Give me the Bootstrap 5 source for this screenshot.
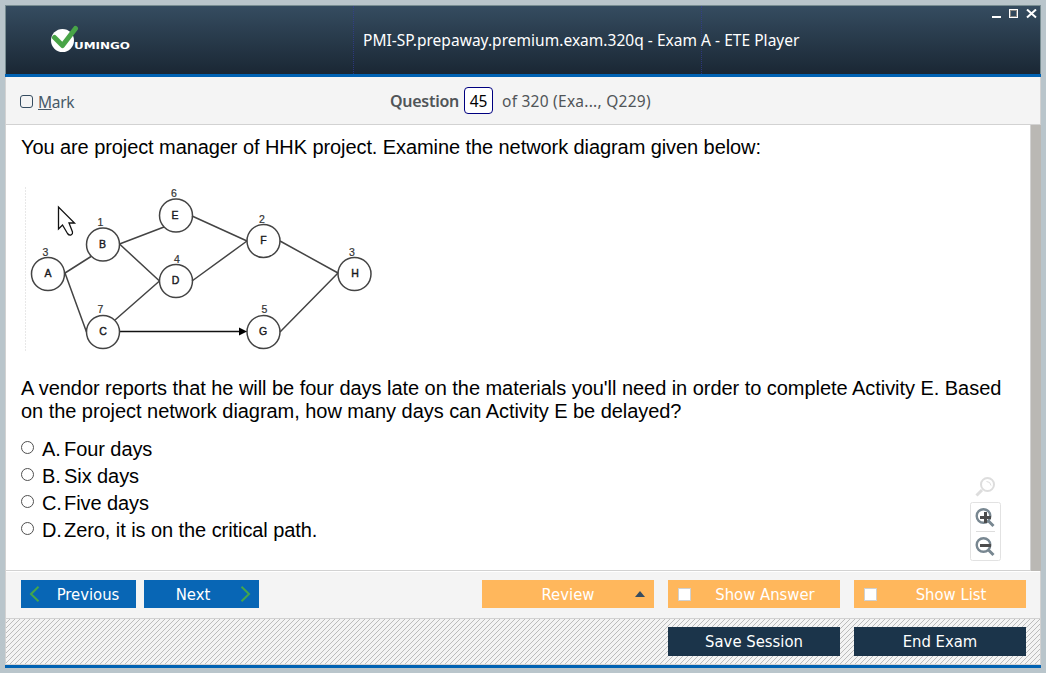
<!DOCTYPE html>
<html lang="en">
<head>
<meta charset="utf-8">
<title>ETE Player</title>
<link rel="stylesheet" href="https://cdn.jsdelivr.net/npm/bootstrap@5.3.0/dist/css/bootstrap.min.css">
<style>
body{background:#b9c5cb;padding:5px;font-family:"Liberation Sans",Arial,sans-serif;color:#000;overflow:hidden}
.player{height:663px;background:#f4f4f4}
.titlebar{height:69px;background:linear-gradient(#354c60,#1a2734);border:1px solid #788d92;border-bottom:0;padding-left:44px}
.titlebar .guide{width:0;border-left:1px dotted #343ca0;left:347px;opacity:.65}
.titlebar .guide + .guide{left:695px}
.caption{left:357px;top:23px;font:15.5px/22px "Noto Sans","Open Sans",sans-serif;color:#fff;white-space:nowrap;letter-spacing:.03px}
.winctl{right:3px;top:3px}
.rule{height:3px;background:#0062b3}
.sub{height:48px;border:solid #d2d2d2;border-width:0 1px 1px;padding-left:14px;font:16px/24px "Noto Sans","Open Sans",sans-serif;color:#505558}
.tick{width:13px;height:13px;border:1px solid #354c60;border-radius:3px;margin:1px 5px 0 0}
.marklabel{width:352px;color:#465968;font-size:15.5px;letter-spacing:-.3px;padding-top:2px}
.qno{width:29px;height:27px;border:1px solid navy;border-radius:4px;background:#fff;color:#000;margin:0 9px 0 5px;font-size:15.5px;line-height:27px}
.qword{font-weight:600;font-size:16px;letter-spacing:-.27px}
.qrest{font-size:15.5px;letter-spacing:.25px}
.content-pane{height:446px;background:#fff;border-left:1px solid #d2d2d2;border-bottom:1px solid #d2d2d2}
.question{padding:10px 0 0 15px;font-size:20px;line-height:24px}
.question p{margin:0;white-space:nowrap;letter-spacing:-.045px;line-height:23px}
.question .intro{letter-spacing:-.08px;line-height:24px}
.scroller{width:11px;background:#bab8b4;border-left:1px solid #d2d2d2;margin-bottom:-1px}
.diagram{margin:26px 0 22px 4px;display:block}
.options{margin-top:13px;letter-spacing:-.07px}
.option{height:27px;line-height:27px}
.option i{width:13px;height:13px;border:1px solid #505050;border-radius:50%;margin:-4px 8px 0 0}
.option b{font-weight:400;width:22px}
.zoomer{right:35px;bottom:6px}
.actions{height:48px;border:solid #d2d2d2;border-width:0 1px 1px;box-shadow:inset 0 1px #fff;padding:0 14px 1px 15px}
.footer-strip{height:46px;border:solid #d2d2d2;border-width:0 1px 1px;padding:0 14px 0 0;background:repeating-linear-gradient(135deg,#f4f4f4 0,#f4f4f4 2.5px,#bcbcbc 2.7px,#bcbcbc 3.2px,#f4f4f4 3.5355px)}
.act{height:28px;border:0;padding:0;border-radius:0;color:#fff;font:16.5px/30px "DejaVu Sans Condensed","DejaVu Sans",sans-serif;font-stretch:condensed;position:relative;text-align:center;white-space:nowrap}
.nav-act{width:115px;background:#0866b5}
.opt-act{width:172px;background:#ffb75c}
.end-act{width:172px;height:29px;background:#1b344a}
.box{width:13px;height:13px;background:#fff;border:1px solid #d0d0d0;left:10px;top:8px}
</style>
<script src="https://cdn.jsdelivr.net/npm/bootstrap@5.3.0/dist/js/bootstrap.bundle.min.js"></script>
</head>
<body>
<main class="player d-flex flex-column">
<header class="titlebar position-relative flex-shrink-0">
  <span class="guide position-absolute top-0 bottom-0"></span><span class="guide position-absolute top-0 bottom-0"></span>
  <svg width="84" height="30" viewBox="50 25 84 30" style="margin-top:19px">
    <circle cx="62.500" cy="40.500" r="11.500" fill="#fff"/>
    <path d="M54.500 37.500 62.500 45.500 75.500 28.500" fill="none" stroke="#48a447" stroke-width="5" stroke-linecap="round" stroke-linejoin="round"/>
    <text x="74" y="49" textLength="56" lengthAdjust="spacingAndGlyphs" font-family="DejaVu Sans" font-weight="700" font-size="9.500" fill="#fff">UMINGO</text>
  </svg>
  <div class="caption position-absolute">PMI-SP.prepaway.premium.exam.320q - Exam A - ETE Player</div>
  <svg class="winctl position-absolute" width="46" height="11" viewBox="0 0 46 11" shape-rendering="crispEdges"><path d="M1 7h9v2H1z" fill="#fff"/><path d="M18.500 .5h8v8h-8z" fill="none" stroke="#fff"/><path d="M19.500 1.500h6v6h-6z" fill="none" stroke="#8b8883"/><path d="M36 .5 45 8.500M45 .5 36 8.500" stroke="#fff" stroke-width="2" shape-rendering="auto"/></svg>
</header>
<div class="rule flex-shrink-0"></div>
<section class="sub d-flex align-items-center flex-shrink-0">
  <span class="tick"></span><div class="marklabel"><u>M</u>ark</div>
  <span class="qword">Question</span><span class="qno text-center">45</span><span class="qrest">of 320 (Exa..., Q229)</span>
</section>
<section class="content-pane d-flex position-relative flex-shrink-0">
  <article class="question flex-grow-1">
    <p class="intro">You are project manager of HHK project. Examine the network diagram given below:</p>
    <svg class="diagram" width="360" height="170" viewBox="25 185 360 170" font-family="Liberation Sans" font-size="10.500" text-anchor="middle">
      <path d="M25.500 187V352" stroke="#e8e8e8" stroke-dasharray="2 1"/>
      <g fill="none" stroke="#444" stroke-width="1.500">
        <path d="M65 273 91 256.500M65 273 86.500 332M119.500 244 164 227M119.500 244 159.500 281M115 320 159.500 281M192 216 247 241M192 281 247 241M280 241 338 273M280 332 338 273"/>
        <path d="M119.500 331.500H242" stroke="#111"/>
        <circle cx="48" cy="274" r="16.500"/><circle cx="103" cy="244.500" r="16.500"/><circle cx="103" cy="332" r="16.500"/><circle cx="176" cy="281" r="16.500"/><circle cx="176" cy="215.500" r="16.500"/><circle cx="263.500" cy="241" r="16.500"/><circle cx="263.500" cy="332" r="16.500"/><circle cx="354.500" cy="274" r="16.500"/>
      </g>
      <path d="M247 331.500 239 327.500V335.500z"/>
      <g fill="#181820" stroke="#181820" stroke-width=".4"><text x="48" y="277">A</text><text x="102.500" y="247.500">B</text><text x="103" y="334.500">C</text><text x="175.500" y="284">D</text><text x="175" y="218.500">E</text><text x="263.500" y="244">F</text><text x="263" y="334.500">G</text><text x="355" y="277">H</text></g>
      <g fill="#333" stroke="#333" stroke-width=".2"><text x="45.500" y="255.500">3</text><text x="100.500" y="225.500">1</text><text x="100.500" y="312.500">7</text><text x="177" y="262.500">4</text><text x="174" y="197">6</text><text x="262" y="222.500">2</text><text x="264.500" y="312.500">5</text><text x="352" y="255.500">3</text></g>
      <path d="M58.500 207V229L62.500 225 67.500 233.500Q69 235.500 71 235 73 234 72.500 232L69 223H74.500z" fill="#fff" stroke="#111" stroke-width="1.300"/>
    </svg>
    <p>A vendor reports that he will be four days late on the materials you'll need in order to complete Activity E. Based<br>on the project network diagram, how many days can Activity E be delayed?</p>
    <div class="options">
      <div class="option d-flex align-items-center"><i></i><b>A.</b>Four days</div>
      <div class="option d-flex align-items-center"><i></i><b>B.</b>Six days</div>
      <div class="option d-flex align-items-center"><i></i><b>C.</b>Five days</div>
      <div class="option d-flex align-items-center"><i></i><b>D.</b>Zero, it is on the critical path.</div>
    </div>
  </article>
  <div class="scroller flex-shrink-0"></div>
  <svg class="zoomer position-absolute" width="38" height="90" viewBox="968 474 38 90" fill="none">
    <circle cx="987.500" cy="484.500" r="6.500" stroke="#ddd" stroke-width="2"/><path d="M982 490 976.500 495.500" stroke="#ddd" stroke-width="3"/><path d="M986.500 481.500q4 0 4.500 4" stroke="#ddd"/>
    <rect x="970.500" y="502.500" width="30" height="58" rx="2" fill="#fff" stroke="#e2e2e2"/><path d="M976 531.500H995" stroke="#ddd"/>
    <g stroke="#788791" stroke-width="2.400"><circle cx="983.500" cy="516" r="6.800"/><circle cx="983.500" cy="545" r="6.800"/><path d="M988.500 521 993.500 526M988.500 550 993.500 555" stroke-width="3"/></g>
    <path d="M980 517.500H991M985.500 512V523" stroke="#4c4c4c" stroke-width="3"/><path d="M980 545.500H991" stroke="#4c4c4c" stroke-width="3"/>
  </svg>
</section>
<nav class="actions d-flex align-items-center flex-shrink-0">
  <button class="act nav-act"><svg class="position-absolute" style="left:8px;top:6px" width="11" height="16"><path d="M9.500 .7 2 8 9.500 15.300" fill="none" stroke="#44a64b" stroke-width="2"/></svg><span style="margin-left:19px">Previous</span></button>
  <button class="act nav-act" style="margin-left:8px"><span style="margin-right:17px">Next</span><svg class="position-absolute" style="right:8px;top:6px" width="11" height="16"><path d="M1.500 .7 9 8 1.500 15.300" fill="none" stroke="#44a64b" stroke-width="2"/></svg></button>
  <button class="act opt-act ms-auto">Review<svg class="position-absolute" style="right:9px;top:11px" width="10" height="6"><path d="M0 6 5 0 10 6z" fill="#354c60"/></svg></button>
  <button class="act opt-act" style="margin-left:14px"><span class="box position-absolute"></span><span style="margin-left:22px">Show Answer</span></button>
  <button class="act opt-act" style="margin-left:14px"><span class="box position-absolute"></span><span style="margin-left:22px">Show List</span></button>
</nav>
<footer class="footer-strip d-flex align-items-center justify-content-end flex-shrink-0">
  <button class="act end-act">Save Session</button><button class="act end-act" style="margin-left:14px">End Exam</button>
</footer>
<div class="rule flex-shrink-0"></div>
</main>
</body>
</html>
